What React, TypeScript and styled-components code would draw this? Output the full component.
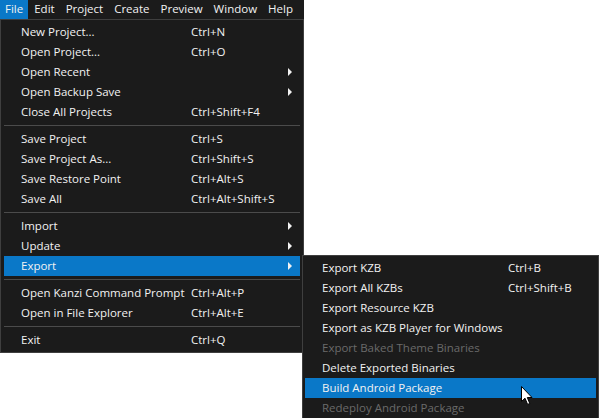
import React from "react";
import styled, { createGlobalStyle } from "styled-components";

const GlobalStyle = createGlobalStyle`
  html, body {
    margin: 0;
    background: #ffffff;
  }
  body {
    font-family: "Open Sans", "Noto Sans", "Liberation Sans", sans-serif;
    font-size: 11.5px;
  }
`;

const Screen = styled.div`
  position: relative;
  width: 599px;
  height: 418px;
  overflow: hidden;
`;

const MenuBar = styled.div`
  display: inline-flex;
  align-items: center;
  gap: 1px;
  height: 19px;
  width: 304px;
  background: #1b1b1b;
  color: #f2f2f2;
`;

const MenuTitle = styled.div<{ $active?: boolean }>`
  height: 19px;
  line-height: 18px;
  padding: 0 5px;
  background: ${(p) => (p.$active ? "#0a78c8" : "transparent")};
`;

const Menu = styled.div<{ $left: number; $top: number; $width: number }>`
  position: absolute;
  left: ${(p) => p.$left}px;
  top: ${(p) => p.$top}px;
  width: ${(p) => p.$width}px;
  box-sizing: border-box;
  background: #1b1b1b;
  border: 1px solid #3f3f3f;
  padding: 2px 3px 2px 3px;
  color: #f2f2f2;
`;

const SubMenu = styled(Menu)`
  padding: 2px 2px 2px 2px;
  border-bottom: none;
`;

const Item = styled.div<{ $labelWidth: number; $active?: boolean; $disabled?: boolean }>`
  display: grid;
  grid-template-columns: ${(p) => p.$labelWidth}px 1fr 10px;
  align-items: center;
  height: 20px;
  padding-left: 17px;
  padding-right: 2px;
  white-space: nowrap;
  background: ${(p) => (p.$active ? "#0a78c8" : "transparent")};
  color: ${(p) => (p.$disabled ? "#6a6a6a" : "#f2f2f2")};
`;

const Label = styled.span`
  line-height: 20px;
`;

const Shortcut = styled.span`
  line-height: 20px;
`;

const Arrow = styled.span`
  justify-self: start;
  width: 0;
  height: 0;
  border-top: 4px solid transparent;
  border-bottom: 4px solid transparent;
  border-left: 4px solid #f2f2f2;
`;

const Separator = styled.div`
  height: 7px;
  display: flex;
  align-items: center;
  &::after {
    content: "";
    flex: 1;
    height: 1px;
    background: #4b4b4b;
  }
`;

const Cursor = styled.svg`
  position: absolute;
  left: 521px;
  top: 386px;
`;

type Entry =
  | { sep: true }
  | { label: string; shortcut?: string; sub?: boolean; active?: boolean; disabled?: boolean };

const fileMenu: Entry[] = [
  { label: "New Project...", shortcut: "Ctrl+N" },
  { label: "Open Project...", shortcut: "Ctrl+O" },
  { label: "Open Recent", sub: true },
  { label: "Open Backup Save", sub: true },
  { label: "Close All Projects", shortcut: "Ctrl+Shift+F4" },
  { sep: true },
  { label: "Save Project", shortcut: "Ctrl+S" },
  { label: "Save Project As...", shortcut: "Ctrl+Shift+S" },
  { label: "Save Restore Point", shortcut: "Ctrl+Alt+S" },
  { label: "Save All", shortcut: "Ctrl+Alt+Shift+S" },
  { sep: true },
  { label: "Import", sub: true },
  { label: "Update", sub: true },
  { label: "Export", sub: true, active: true },
  { sep: true },
  { label: "Open Kanzi Command Prompt", shortcut: "Ctrl+Alt+P" },
  { label: "Open in File Explorer", shortcut: "Ctrl+Alt+E" },
  { sep: true },
  { label: "Exit", shortcut: "Ctrl+Q" },
];

const exportMenu: Entry[] = [
  { label: "Export KZB", shortcut: "Ctrl+B" },
  { label: "Export All KZBs", shortcut: "Ctrl+Shift+B" },
  { label: "Export Resource KZB" },
  { label: "Export as KZB Player for Windows" },
  { label: "Export Baked Theme Binaries", disabled: true },
  { label: "Delete Exported Binaries" },
  { label: "Build Android Package", active: true },
  { label: "Redeploy Android Package", disabled: true },
];

const renderEntries = (entries: Entry[], labelWidth: number) =>
  entries.map((e, i) =>
    "sep" in e ? (
      <Separator key={i} />
    ) : (
      <Item key={i} $labelWidth={labelWidth} $active={e.active} $disabled={e.disabled}>
        <Label>{e.label}</Label>
        <Shortcut>{e.shortcut}</Shortcut>
        {e.sub ? <Arrow /> : <span />}
      </Item>
    )
  );

const App: React.FC = () => {
  const titles = ["File", "Edit", "Project", "Create", "Preview", "Window", "Help"];
  return (
    <Screen>
      <GlobalStyle />
      <MenuBar>
        {titles.map((t, i) => (
          <MenuTitle key={t} $active={i === 0}>
            {t}
          </MenuTitle>
        ))}
      </MenuBar>

      <Menu $left={0} $top={19} $width={304}>
        {renderEntries(fileMenu, 170)}
      </Menu>

      <SubMenu $left={302} $top={255} $width={297}>
        {renderEntries(exportMenu, 186)}
      </SubMenu>

      {/* mouse pointer */}
      <Cursor width="13" height="20" viewBox="0 0 13 20">
        <path
          d="M0.5 0.5 L0.5 15.5 L4 12.2 L6.6 18.4 L8.8 17.5 L6.3 11.5 L11 11.5 Z"
          fill="#ffffff"
          stroke="#000000"
          strokeWidth="1"
          strokeLinejoin="miter"
        />
      </Cursor>
    </Screen>
  );
};

export default App;
